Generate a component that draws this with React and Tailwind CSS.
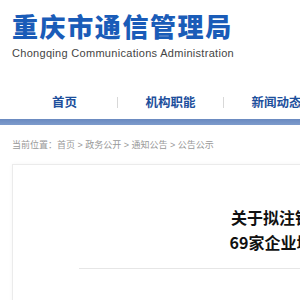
import React from 'react';

const navItems = ['首页', '机构职能', '新闻动态', '政务公开', '网上办事'];
const crumbs = ['首页', '政务公开', '通知公告', '公告公示'];

export default function App() {
  return (
    <div className="w-[300px] h-[300px] overflow-hidden bg-white font-['Noto_Sans_CJK_SC',sans-serif]">
      {/* Header: logo */}
      <div className="px-[12px] pt-[11px] h-[86px]">
        <h1 className="text-[26px] leading-[30px] font-black tracking-[1.6px] text-[#1a5cb8] whitespace-nowrap">
          重庆市通信管理局
        </h1>
        <p className="mt-[5px] text-[11px] leading-[14px] text-[#444] font-['Liberation_Sans',sans-serif] tracking-[0.3px] whitespace-nowrap">
          Chongqing Communications Administration
        </p>
      </div>

      {/* Nav */}
      <nav className="flex pl-[12px] h-[33px] items-center">
        {navItems.map((item) => (
          <div key={item} className="flex items-center shrink-0">
            <span className="w-[105px] text-center text-[12.5px] font-bold text-[#1d4f9c] whitespace-nowrap">
              {item}
            </span>
            <span className="w-px h-[11px] bg-[#d8d8d8]" />
          </div>
        ))}
      </nav>
      <div className="h-[6px] bg-gradient-to-b from-[#6a8ac0] to-[#7d9bcc]" />

      {/* Breadcrumb */}
      <div className="px-[12px] pt-[14px] h-[39px] text-[9px] leading-[12px] text-[#999] whitespace-nowrap">
        当前位置：
        {crumbs.map((c, i) => (
          <span key={c}>
            {i > 0 && <span className="font-['Liberation_Sans',sans-serif]"> &gt; </span>}
            {c}
          </span>
        ))}
      </div>

      {/* Article card */}
      <div className="ml-[12px] w-[726px] border border-[#ebebeb] shadow-[0_0_4px_rgba(0,0,0,0.04)] bg-white">
        <div className="mx-[66px] pt-[40px]">
          <h2 className="text-center text-[16px] leading-[25px] font-bold text-[#111] whitespace-nowrap">
            关于拟注销重庆市辖区互联网信息服务等
            <br />
            69家企业增值电信业务经营许可证的公示
          </h2>
          <div className="mt-[13px] h-px bg-[#e6e6e6]" />
          <div className="h-[40px]" />
        </div>
      </div>
    </div>
  );
}
